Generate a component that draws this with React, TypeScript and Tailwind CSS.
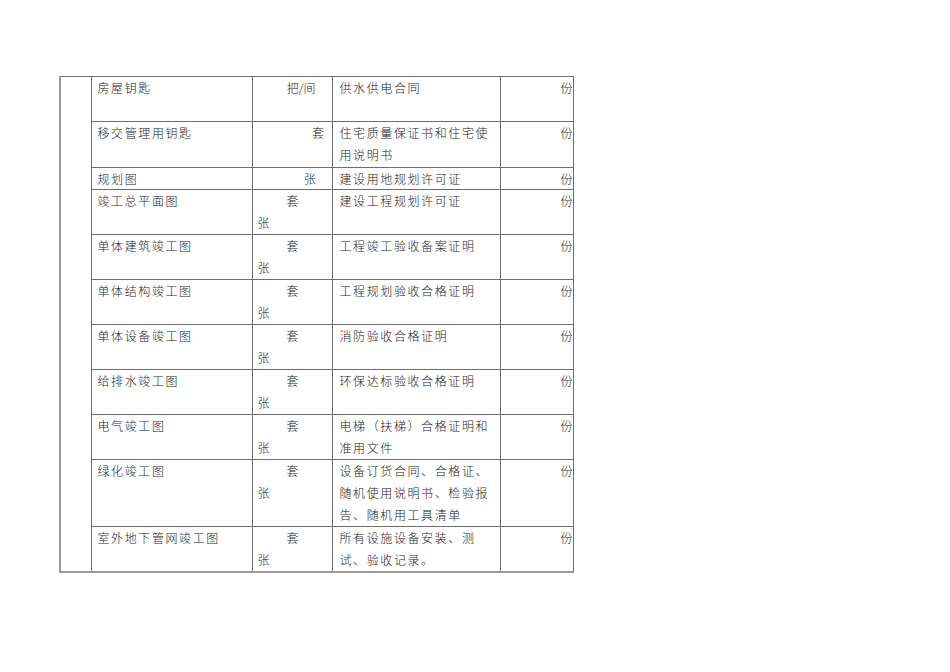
import React from 'react';

type Row = {
  h: string;
  name: string;
  unit: React.ReactNode;
  doc: React.ReactNode;
};

const TaoZhang = () => (
  <div className="leading-[22px]">
    <div className="pl-[34px]">套</div>
    <div className="pl-[5px]">张</div>
  </div>
);

const rows: Row[] = [
  {
    h: 'h-[45px]',
    name: '房屋钥匙',
    unit: <div className="leading-[22px] text-right pr-[16px] tracking-normal">把/间</div>,
    doc: '供水供电合同',
  },
  {
    h: 'h-[46px]',
    name: '移交管理用钥匙',
    unit: <div className="leading-[22px] text-right pr-[6px]">套</div>,
    doc: (
      <>
        住宅质量保证书和住宅使
        <br />
        用说明书
      </>
    ),
  },
  {
    h: 'h-[22px]',
    name: '规划图',
    unit: <div className="leading-[21px] text-right pr-[14px]">张</div>,
    doc: '建设用地规划许可证',
  },
  { h: 'h-[45px]', name: '竣工总平面图', unit: <TaoZhang />, doc: '建设工程规划许可证' },
  { h: 'h-[45px]', name: '单体建筑竣工图', unit: <TaoZhang />, doc: '工程竣工验收备案证明' },
  { h: 'h-[45px]', name: '单体结构竣工图', unit: <TaoZhang />, doc: '工程规划验收合格证明' },
  { h: 'h-[45px]', name: '单体设备竣工图', unit: <TaoZhang />, doc: '消防验收合格证明' },
  { h: 'h-[45px]', name: '给排水竣工图', unit: <TaoZhang />, doc: '环保达标验收合格证明' },
  {
    h: 'h-[45px]',
    name: '电气竣工图',
    unit: <TaoZhang />,
    doc: (
      <>
        电梯（扶梯）合格证明和
        <br />
        准用文件
      </>
    ),
  },
  {
    h: 'h-[67px]',
    name: '绿化竣工图',
    unit: <TaoZhang />,
    doc: (
      <>
        设备订货合同、合格证、
        <br />
        随机使用说明书、检验报
        <br />
        告、随机用工具清单
      </>
    ),
  },
  {
    h: 'h-[44px]',
    name: '室外地下管网竣工图',
    unit: <TaoZhang />,
    doc: (
      <>
        所有设施设备安装、测
        <br />
        试、验收记录。
      </>
    ),
  },
];

export default function App() {
  const cell = 'border border-[#6e6e6e] align-top p-0';
  const last = 'border-b-2 border-b-[#9a9a9a]';
  return (
    <div
      className="min-h-[672px] w-[950px] bg-white pt-[76px] pl-[59px] text-[12px] text-[#1a1a1a] tracking-[1.6px]"
      style={{ fontFamily: '"Noto Sans CJK SC", "Noto Sans", sans-serif' }}
    >
      <table className="table-fixed border-collapse w-[513px]">
        <colgroup>
          <col className="w-[31px]" />
          <col className="w-[161px]" />
          <col className="w-[80px]" />
          <col className="w-[168px]" />
          <col className="w-[73px]" />
        </colgroup>
        <tbody>
          {rows.map((r, i) => {
            const b = i === rows.length - 1 ? last : '';
            const lh = i === 2 ? 'leading-[21px]' : 'leading-[22px]';
            return (
              <tr key={i} className={r.h}>
                {i === 0 && (
                  <td
                    rowSpan={rows.length}
                    className="border border-[#6e6e6e] border-l-2 border-l-[#9a9a9a] border-b-2 border-b-[#9a9a9a] p-0"
                  />
                )}
                <td className={`${cell} ${b}`}>
                  <div className={`${lh} pl-[6px] font-light`}>{r.name}</div>
                </td>
                <td className={`${cell} font-light ${b}`}>{r.unit}</td>
                <td className={`${cell} ${b}`}>
                  <div className={`${lh} pl-[7px] font-light whitespace-nowrap`}>{r.doc}</div>
                </td>
                <td className={`${cell} ${b}`}>
                  <div className={`${lh} text-right font-light tracking-normal`}>份</div>
                </td>
              </tr>
            );
          })}
        </tbody>
      </table>
    </div>
  );
}
